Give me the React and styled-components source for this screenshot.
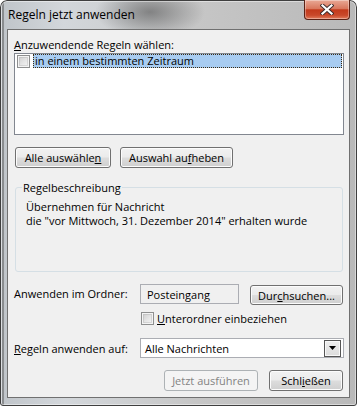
import React from 'react'
import styled, { createGlobalStyle } from 'styled-components'

const GlobalStyle = createGlobalStyle`
  html, body {
    margin: 0;
    padding: 0;
    background: #ffffff;
  }
  body {
    font-family: "Open Sans", "Noto Sans", sans-serif;
    font-size: 11px;
    color: #000;
  }
`

const Window = styled.div`
  width: 357px;
  height: 406px;
  box-sizing: border-box;
  display: flex;
  flex-direction: column;
  padding: 0 7px 8px;
  border-radius: 7px 7px 3px 3px;
  background:
    radial-gradient(ellipse 55px 26px at 150px 12px, rgba(70, 70, 70, 0.55), transparent),
    linear-gradient(90deg, transparent 2px, rgba(70, 70, 70, 0.45) 2px, rgba(70, 70, 70, 0.45) 4px, transparent 4px),
    linear-gradient(90deg, #bfc4c9 0%, #d3d7db 18%, #c6c6c6 55%, #b9b9b9 100%);
  box-shadow: inset 0 0 0 1px #3f3f3f, inset 0 0 0 2px rgba(255, 255, 255, 0.45);
`

const TitleBar = styled.div`
  height: 29px;
  display: flex;
  align-items: flex-start;
  flex-shrink: 0;
`

const Title = styled.div`
  margin: 7px 0 0 1px;
  font-size: 12px;
  line-height: 16px;
  color: #000;
`

const CloseButton = styled.div`
  margin-left: auto;
  width: 46px;
  height: 20px;
  box-sizing: border-box;
  border: 1px solid #5a2216;
  border-top: none;
  border-radius: 0 0 4px 4px;
  background: linear-gradient(#e9a996 0%, #d9785e 45%, #c33a1c 52%, #c9482a 80%, #e27d5d 100%);
  box-shadow: inset 0 0 0 1px rgba(255, 255, 255, 0.35);
  display: flex;
  align-items: center;
  justify-content: center;
`

const Client = styled.div`
  flex: 1;
  display: flex;
  flex-direction: column;
  border: 1px solid #707070;
  background: #f0f0f0;
  padding: 7px 5px 0 6px;
`

const Key = styled.u`
  text-decoration: underline;
`

const Label = styled.div`
  line-height: 15px;
  white-space: nowrap;
  width: ${p => p.$width || 'auto'};
  flex-shrink: 0;
`

const ListBox = styled.div`
  margin-top: 1px;
  height: 82px;
  box-sizing: border-box;
  border: 1px solid #828790;
  background: #fff;
`

const ListItem = styled.div`
  display: flex;
  align-items: center;
  height: 14px;
  margin: 0 1px 0 2px;
`

const CheckBox = styled.span`
  display: block;
  width: 13px;
  height: 13px;
  box-sizing: border-box;
  border: 1px solid #8e8f8f;
  background: linear-gradient(135deg, #cbcbcb 0%, #e6e6e6 55%, #f7f7f7 100%);
  box-shadow: inset 0 0 0 1px #f4f4f4, inset 0 0 0 2px rgba(170, 170, 170, 0.35);
  flex-shrink: 0;
`

const ItemText = styled.div`
  flex: 1;
  margin-left: 3px;
  height: 14px;
  box-sizing: border-box;
  border: 1px dotted #3a2a10;
  background: #a8ccf1;
  line-height: 12px;
  padding-left: 1px;
`

const ButtonRow = styled.div`
  display: flex;
  gap: 9px;
  margin-top: ${p => p.$top || 0}px;
  padding-left: ${p => p.$left || 0}px;
  justify-content: ${p => p.$end ? 'flex-end' : 'flex-start'};
  padding-right: ${p => p.$end ? 1 : 0}px;
`

const Button = styled.div`
  width: ${p => p.$width}px;
  height: ${p => p.$height || 21}px;
  box-sizing: border-box;
  border: 1px solid ${p => p.$disabled ? '#adb2b5' : '#707070'};
  border-radius: 3px;
  background: ${p => p.$disabled
    ? '#f4f4f4'
    : 'linear-gradient(#f2f2f2 0%, #ebebeb 48%, #dddddd 52%, #cfcfcf 100%)'};
  box-shadow: ${p => p.$disabled ? 'none' : 'inset 0 0 0 1px #fcfcfc'};
  color: ${p => p.$disabled ? '#838383' : '#000'};
  display: flex;
  align-items: center;
  justify-content: center;
  line-height: 15px;
  white-space: nowrap;
  flex-shrink: 0;
  margin-top: ${p => p.$top || 0}px;
`

const Group = styled.fieldset`
  margin: 12px 1px 0 1px;
  height: 92px;
  box-sizing: border-box;
  border: 1px solid #d5dfe5;
  border-radius: 3px;
  padding: 0 10px;
  min-width: 0;
`

const Legend = styled.legend`
  margin-left: -4px;
  padding: 0 1px;
  line-height: 15px;
`

const Description = styled.div`
  margin-top: 5px;
  line-height: 14px;
`

const FieldRow = styled.div`
  display: flex;
  align-items: ${p => p.$top ? 'flex-start' : 'center'};
  margin-top: ${p => p.$mt || 0}px;
  min-height: 20px;
`

const TextBox = styled.div`
  width: ${p => p.$width}px;
  height: 20px;
  box-sizing: border-box;
  border: 1px solid #abadb3;
  background: ${p => p.$white ? '#fff' : '#f0f0f0'};
  display: flex;
  align-items: center;
  padding-left: ${p => p.$pad || 5}px;
  line-height: 15px;
  flex-shrink: 0;
`

const CheckRow = styled.div`
  display: flex;
  align-items: center;
  height: 15px;
  margin-top: 6px;
  padding-left: 127px;
`

const CheckLabel = styled.span`
  margin-left: 3px;
  line-height: 15px;
`

const Select = styled(TextBox)`
  justify-content: space-between;
  padding-right: 2px;
`

const DropButton = styled.div`
  width: 17px;
  height: 17px;
  box-sizing: border-box;
  border: 1px solid #555;
  background: linear-gradient(#eeeeee, #dcdcdc);
  box-shadow: inset 0 0 0 1px #f8f8f8;
  display: flex;
  align-items: center;
  justify-content: center;
`

const CloseIcon = () => (
  <svg width="14" height="11" viewBox="0 0 14 11">
    <path d="M2.5 1.5 L11.5 9.5 M11.5 1.5 L2.5 9.5" stroke="#3b2a2a" strokeWidth="4" strokeLinecap="square" />
    <path d="M2.5 1.5 L11.5 9.5 M11.5 1.5 L2.5 9.5" stroke="#ffffff" strokeWidth="2.2" strokeLinecap="square" />
  </svg>
)

const Arrow = () => (
  <svg width="7" height="4" viewBox="0 0 7 4">
    <path d="M0 0 H7 L3.5 4 Z" fill="#000" />
  </svg>
)

export default function App() {
  return (
    <>
      <GlobalStyle />
      <Window>
        <TitleBar>
          <Title>Regeln jetzt anwenden</Title>
          <CloseButton><CloseIcon /></CloseButton>
        </TitleBar>
        <Client>
          <Label><Key>A</Key>nzuwendende Regeln wählen:</Label>
          <ListBox>
            <ListItem>
              <CheckBox />
              <ItemText>in einem bestimmten Zeitraum</ItemText>
            </ListItem>
          </ListBox>

          <ButtonRow $top={12} $left={1}>
            <Button $width={96}>Alle auswähle<Key>n</Key></Button>
            <Button $width={113}>Auswahl au<Key>f</Key>heben</Button>
          </ButtonRow>

          <Group>
            <Legend>Regelbeschreibung</Legend>
            <Description>
              Übernehmen für Nachricht<br />
              die "vor Mittwoch, 31. Dezember 2014" erhalten wurde
            </Description>
          </Group>

          <FieldRow $mt={12} $top>
            <Label $width="126px" style={{ marginTop: 2 }}>Anwenden im Ordner:</Label>
            <TextBox $width={99} $pad={6}>Posteingang</TextBox>
            <Button $width={93} $height={20} $top={1} style={{ marginLeft: 11 }}>Dur<Key>c</Key>hsuchen...</Button>
          </FieldRow>

          <CheckRow>
            <CheckBox />
            <CheckLabel><Key>U</Key>nterordner einbeziehen</CheckLabel>
          </CheckRow>

          <FieldRow $mt={12}>
            <Label $width="126px"><Key>R</Key>egeln anwenden auf:</Label>
            <Select $width={204} $white $pad={4}>
              Alle Nachrichten
              <DropButton><Arrow /></DropButton>
            </Select>
          </FieldRow>

          <ButtonRow $top={12} $end>
            <Button $width={94} $disabled><Key>J</Key>etzt ausführen</Button>
            <Button $width={74} style={{ marginLeft: 2 }}>Schl<Key>i</Key>eßen</Button>
          </ButtonRow>
        </Client>
      </Window>
    </>
  )
}
